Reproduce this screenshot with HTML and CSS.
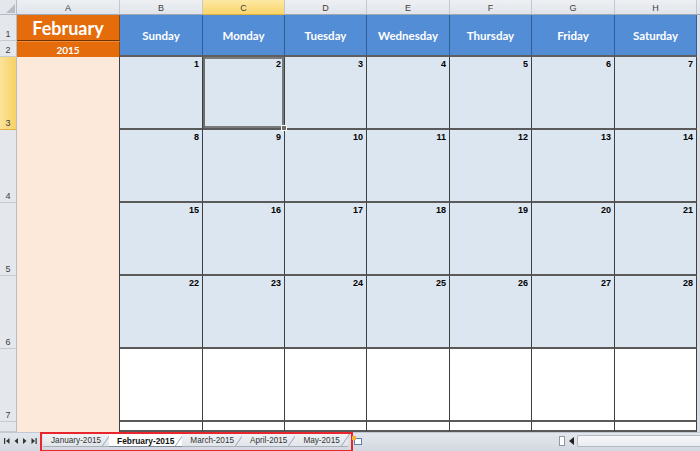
FILE: index.html
```html
<!DOCTYPE html>
<html>
<head>
<meta charset="utf-8">
<link rel="stylesheet" href="styles.css">
</head>
<body>
<div class="app">
  <div class="sheet">
    <div class="corner"><svg width="9" height="9" viewBox="0 0 9 9"><polygon points="9,0 9,9 0,9" fill="#b9bec6"/></svg></div>
    <div class="colhead">A</div>
    <div class="colhead">B</div>
    <div class="colhead sel">C</div>
    <div class="colhead">D</div>
    <div class="colhead">E</div>
    <div class="colhead">F</div>
    <div class="colhead">G</div>
    <div class="colhead">H</div>
    <div class="colhead edge"></div>

    <div class="rowhead r1">1</div>
    <div class="month">February</div>
    <div class="day">Sunday</div>
    <div class="day">Monday</div>
    <div class="day">Tuesday</div>
    <div class="day">Wednesday</div>
    <div class="day">Thursday</div>
    <div class="day">Friday</div>
    <div class="day">Saturday</div>
    <div class="edgecell e12"></div>

    <div class="rowhead r2">2</div>
    <div class="year">2015</div>

    <div class="rowhead r3 sel">3</div>
    <div class="notes"></div>
    <div class="cell"><span>1</span></div>
    <div class="cell selected"><span>2</span></div>
    <div class="cell"><span>3</span></div>
    <div class="cell"><span>4</span></div>
    <div class="cell"><span>5</span></div>
    <div class="cell"><span>6</span></div>
    <div class="cell"><span>7</span></div>
    <div class="edgecell"></div>

    <div class="rowhead">4</div>
    <div class="cell"><span>8</span></div>
    <div class="cell"><span>9</span></div>
    <div class="cell"><span>10</span></div>
    <div class="cell"><span>11</span></div>
    <div class="cell"><span>12</span></div>
    <div class="cell"><span>13</span></div>
    <div class="cell"><span>14</span></div>
    <div class="edgecell"></div>

    <div class="rowhead">5</div>
    <div class="cell"><span>15</span></div>
    <div class="cell"><span>16</span></div>
    <div class="cell"><span>17</span></div>
    <div class="cell"><span>18</span></div>
    <div class="cell"><span>19</span></div>
    <div class="cell"><span>20</span></div>
    <div class="cell"><span>21</span></div>
    <div class="edgecell"></div>

    <div class="rowhead">6</div>
    <div class="cell"><span>22</span></div>
    <div class="cell"><span>23</span></div>
    <div class="cell"><span>24</span></div>
    <div class="cell"><span>25</span></div>
    <div class="cell"><span>26</span></div>
    <div class="cell"><span>27</span></div>
    <div class="cell"><span>28</span></div>
    <div class="edgecell"></div>

    <div class="rowhead">7</div>
    <div class="cell blank"></div>
    <div class="cell blank"></div>
    <div class="cell blank"></div>
    <div class="cell blank"></div>
    <div class="cell blank"></div>
    <div class="cell blank"></div>
    <div class="cell blank"></div>
    <div class="edgecell"></div>

    <div class="rowhead"></div>
    <div class="cell blank"></div>
    <div class="cell blank"></div>
    <div class="cell blank"></div>
    <div class="cell blank"></div>
    <div class="cell blank"></div>
    <div class="cell blank"></div>
    <div class="cell blank"></div>
    <div class="edgecell"></div>
  </div>

  <div class="tabbar">
    <div class="nav">
      <svg width="38" height="8" viewBox="0 0 38 8">
        <rect x="3" y="1" width="1.2" height="6" fill="#333"/>
        <polygon points="8.5,1 8.5,7 5,4" fill="#333"/>
        <polygon points="17,1 17,7 13.5,4" fill="#333"/>
        <polygon points="22,1 22,7 25.5,4" fill="#333"/>
        <polygon points="30.5,1 30.5,7 34,4" fill="#333"/>
        <rect x="34.5" y="1" width="1.2" height="6" fill="#333"/>
      </svg>
    </div>
    <div class="tabs">
      <div class="tab">January-2015</div>
      <div class="tab active">February-2015</div>
      <div class="tab">March-2015</div>
      <div class="tab">April-2015</div>
      <div class="tab">May-2015</div>
      <div class="newtab">
        <svg width="12" height="11" viewBox="0 0 12 11">
          <rect x="3.5" y="3.5" width="7" height="6" fill="#fff" stroke="#5b7fb0"/>
          <rect x="1" y="1" width="4" height="4" fill="#f2b534"/>
        </svg>
      </div>
    </div>
    <div class="spacer"></div>
    <div class="split"></div>
    <div class="scrollarrow">
      <svg width="6" height="8" viewBox="0 0 6 8"><polygon points="5,0 5,8 0,4" fill="#222"/></svg>
    </div>
    <div class="track"></div>
  </div>
</div>
</body>
</html>
```

FILE: styles.css
```css
html, body {
  margin: 0;
  padding: 0;
}
body {
  width: 700px;
  height: 451px;
  overflow: hidden;
  background: #ffffff;
  font-family: "Liberation Sans", Arial, sans-serif;
}
.app {
  width: 700px;
  height: 451px;
  display: flex;
  flex-direction: column;
}
.sheet {
  display: grid;
  grid-template-columns: 17px 103px 83px 82px 82px 83px 82px 83px 82px 3px;
  grid-template-rows: 15px 26px 16px 73px 73px 73px 73px 73px 10px;
  height: 432px;
  flex: none;
}
.corner {
  background: #e4e7ec;
  border-right: 1px solid #b7bcc4;
  border-bottom: 1px solid #b7bcc4;
  box-sizing: border-box;
  display: flex;
  align-items: flex-end;
  justify-content: flex-end;
  padding: 0 1px 1px 0;
}
.colhead {
  background: linear-gradient(#eef0f3, #e0e4ea);
  border-right: 1px solid #c4c8ce;
  border-bottom: 1px solid #9ea7b4;
  box-sizing: border-box;
  font-size: 9px;
  color: #404040;
  display: flex;
  align-items: center;
  justify-content: center;
  padding-top: 1px;
}
.colhead.sel {
  background: linear-gradient(#fde9a3, #f9d46a);
  border-bottom: 1px solid #e2b33c;
}
.colhead.edge {
  border-right: none;
}
.rowhead {
  background: #e4e7ec;
  border-right: 1px solid #b7bcc4;
  border-bottom: 1px solid #c7cbd1;
  box-sizing: border-box;
  font-size: 9px;
  color: #404040;
  display: flex;
  align-items: flex-end;
  justify-content: center;
  padding-bottom: 1px;
}
.rowhead.sel {
  background: linear-gradient(90deg, #fce39a, #f8d165);
  border-bottom: 1px solid #e2b33c;
}
.month {
  background: #e46c0a;
  color: #ffffff;
  font-family: Lato, "Open Sans", sans-serif;
  font-weight: 700;
  font-size: 18px;
  display: flex;
  align-items: center;
  justify-content: center;
  border-bottom: 1px solid #6f3400;
  border-right: 1px solid #8a4a12;
  box-sizing: border-box;
}
.year {
  grid-column: 2;
  background: #e46c0a;
  color: #ffffff;
  font-family: Lato, "Open Sans", sans-serif;
  font-weight: 700;
  font-size: 10px;
  display: flex;
  align-items: center;
  justify-content: center;
  border-top: 1px solid #f08a36;
  border-right: 1px solid #8a4a12;
  box-sizing: border-box;
}
.day {
  grid-row: span 2;
  background: #538dd5;
  color: #ffffff;
  font-family: Lato, "Open Sans", sans-serif;
  font-weight: 700;
  font-size: 11.5px;
  display: flex;
  align-items: center;
  justify-content: center;
  border-right: 1px solid #2f5e99;
  border-bottom: 2px solid #5f5f5f;
  box-sizing: border-box;
}
.edgecell {
  background: #d9dde3;
}
.edgecell.e12 {
  grid-row: span 2;
}
.notes {
  grid-row: span 6;
  background: #fde9d9;
  border-right: 1px solid #404040;
  box-sizing: border-box;
}
.cell {
  background: #dce6f1;
  border-right: 1px solid #3f3f3f;
  border-bottom: 2px solid #5a5a5a;
  box-sizing: border-box;
  display: flex;
  justify-content: flex-end;
  align-items: flex-start;
  padding: 2px 3px 0 0;
  font-size: 9px;
  font-weight: 700;
  color: #000000;
  position: relative;
}
.cell.blank {
  background: #ffffff;
}
.cell.selected {
  box-shadow: inset 2px 0 0 #6e6e6e, inset 0 0 0 2px #7a7a7a;
}
.cell.selected::after {
  content: "";
  position: absolute;
  right: -3px;
  bottom: -3px;
  width: 4px;
  height: 4px;
  background: #6e6e6e;
  border: 1px solid #ffffff;
  z-index: 2;
}
.tabbar {
  flex: 1;
  display: flex;
  align-items: stretch;
  background: linear-gradient(#e3e7ed, #d3d8e0);
  border-top: 1px solid #c3c9d2;
  box-sizing: border-box;
}
.nav {
  width: 40px;
  display: flex;
  align-items: center;
  padding-left: 1px;
  padding-bottom: 2px;
  box-sizing: border-box;
}
.tabs {
  display: flex;
  align-items: stretch;
  border: 2px solid #e8262b;
  border-bottom-width: 1px;
  box-sizing: border-box;
  width: 313px;
  padding-left: 1px;
  padding-bottom: 3px;
  margin-top: -1px;
}
.tab {
  font-size: 8.2px;
  color: #333333;
  white-space: nowrap;
  flex: none;
  display: flex;
  align-items: center;
  padding: 1px 8px 0 8px;
  position: relative;
  background: linear-gradient(#f1f3f6, #e1e5ea);
  border-bottom: 1px solid #a7afbb;
}
.tab::after {
  content: "";
  position: absolute;
  right: 2px;
  top: 0;
  bottom: 0;
  width: 0;
  border-right: 1px solid #9aa3b0;
  transform: skewX(-35deg);
}
.tab.active {
  background: #ffffff;
  font-weight: 700;
  font-size: 8.4px;
  color: #111111;
  border-bottom: 1px solid #7f8a99;
}
.newtab {
  display: flex;
  align-items: center;
  padding-left: 3px;
  flex: none;
}
.spacer {
  flex: 1;
}
.split {
  width: 4px;
  margin: 3px 2px 5px 0;
  background: #ffffff;
  border: 1px solid #8f98a5;
}
.scrollarrow {
  width: 10px;
  display: flex;
  align-items: center;
  justify-content: center;
  padding-bottom: 2px;
}
.track {
  width: 122px;
  margin: 2px 0 4px 0;
  background: linear-gradient(#f6f7f9, #e9ecf0);
  border: 1px solid #b3bac5;
  border-right: none;
  border-radius: 2px 0 0 2px;
}
```
